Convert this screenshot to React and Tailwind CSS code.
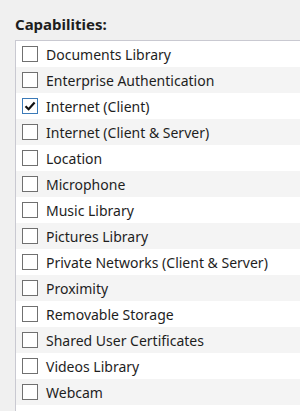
import React from 'react';

const capabilities = [
  { name: 'Documents Library' },
  { name: 'Enterprise Authentication' },
  { name: 'Internet (Client)', checked: true },
  { name: 'Internet (Client & Server)' },
  { name: 'Location' },
  { name: 'Microphone' },
  { name: 'Music Library' },
  { name: 'Pictures Library' },
  { name: 'Private Networks (Client & Server)' },
  { name: 'Proximity' },
  { name: 'Removable Storage' },
  { name: 'Shared User Certificates' },
  { name: 'Videos Library' },
  { name: 'Webcam' },
  { name: '' },
];

const CheckBox = ({ checked }) => (
  <div
    className={
      'w-4 h-4 shrink-0 bg-white border flex items-center justify-center ' +
      (checked ? 'border-[#3b7ab8]' : 'border-[#707070]')
    }
  >
    {checked && (
      <svg width="12" height="12" viewBox="0 0 12 12">
        <path d="M1.5 6.2 L4.6 9.2 L10.6 2.4" fill="none" stroke="#111" strokeWidth="2.2" />
      </svg>
    )}
  </div>
);

export default function App() {
  return (
    <div
      className="w-[300px] h-[411px] overflow-hidden bg-[#f0f0f0] text-[#1e1e1e]"
      style={{ fontFamily: '"Noto Sans", "Open Sans", sans-serif' }}
    >
      {/* Titulo */}
      <div className="pl-[15px] pt-[14px] h-[40px] text-[15px] leading-[20px] font-bold">
        Capabilities:
      </div>
      {/* Lista */}
      <div className="ml-[15px] border-l border-t border-[#c9c9d1] w-[300px]">
        {capabilities.map((cap, i) => (
          <div
            key={i}
            className={
              'h-[26px] flex items-center gap-[8px] pl-[6px] text-[14px] ' +
              (i % 2 === 0 ? 'bg-white' : 'bg-[#f4f4f4]')
            }
          >
            {cap.name && <CheckBox checked={cap.checked} />}
            <span className="whitespace-nowrap">{cap.name}</span>
          </div>
        ))}
      </div>
    </div>
  );
}
